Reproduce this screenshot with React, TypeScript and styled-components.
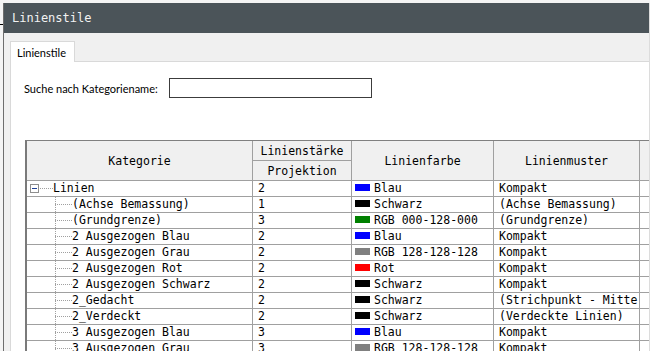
import React from 'react';
import styled, { createGlobalStyle } from 'styled-components';

const mono = `"DejaVu Sans Mono", "Liberation Mono", monospace`;
const sans = `Lato, "Noto Sans", sans-serif`;

type Row = {
    name: string;
    weight: string;
    colorName: string;
    color: string;
    pattern: string;
    parent?: boolean;
};

const rows: Row[] = [
    { name: 'Linien', weight: '2', colorName: 'Blau', color: '#0000ff', pattern: 'Kompakt', parent: true },
    { name: '(Achse Bemassung)', weight: '1', colorName: 'Schwarz', color: '#000000', pattern: '(Achse Bemassung)' },
    { name: '(Grundgrenze)', weight: '3', colorName: 'RGB 000-128-000', color: '#008000', pattern: '(Grundgrenze)' },
    { name: '2 Ausgezogen Blau', weight: '2', colorName: 'Blau', color: '#0000ff', pattern: 'Kompakt' },
    { name: '2 Ausgezogen Grau', weight: '2', colorName: 'RGB 128-128-128', color: '#808080', pattern: 'Kompakt' },
    { name: '2 Ausgezogen Rot', weight: '2', colorName: 'Rot', color: '#ff0000', pattern: 'Kompakt' },
    { name: '2 Ausgezogen Schwarz', weight: '2', colorName: 'Schwarz', color: '#000000', pattern: 'Kompakt' },
    { name: '2_Gedacht', weight: '2', colorName: 'Schwarz', color: '#000000', pattern: '(Strichpunkt - Mitte)' },
    { name: '2_Verdeckt', weight: '2', colorName: 'Schwarz', color: '#000000', pattern: '(Verdeckte Linien)' },
    { name: '3 Ausgezogen Blau', weight: '3', colorName: 'Blau', color: '#0000ff', pattern: 'Kompakt' },
    { name: '3 Ausgezogen Grau', weight: '3', colorName: 'RGB 128-128-128', color: '#808080', pattern: 'Kompakt' },
    { name: '3 Ausgezogen Rot', weight: '3', colorName: 'Rot', color: '#ff0000', pattern: 'Kompakt' },
];

export default function App() {
    return (
        <>
            <GlobalStyle />
            <Desktop>
                <Window>
                    <TitleBar>Linienstile</TitleBar>
                    <Body>
                        <TabStrip>
                            <Tab>Linienstile</Tab>
                        </TabStrip>
                        <TabPage>
                            <SearchRow>
                                <Label>Suche nach Kategoriename:</Label>
                                <SearchInput type="text" />
                            </SearchRow>
                            <Grid>
                                <HeadCell $span={2}>Kategorie</HeadCell>
                                <HeadCell>Linienstärke</HeadCell>
                                <HeadCell $span={2}>Linienfarbe</HeadCell>
                                <HeadCell $span={2}>Linienmuster</HeadCell>
                                <HeadCell $span={2} />
                                <HeadCell>Projektion</HeadCell>

                                {rows.map((r) => (
                                    <React.Fragment key={r.name}>
                                        <TreeCell>
                                            {r.parent ? (
                                                <>
                                                    <Toggle />
                                                    <Stub />
                                                </>
                                            ) : (
                                                <>
                                                    <Indent />
                                                    <Branch />
                                                </>
                                            )}
                                            <CellText>{r.name}</CellText>
                                        </TreeCell>
                                        <Cell>{r.weight}</Cell>
                                        <ColorCell>
                                            <Swatch style={{ background: r.color }} />
                                            <CellText>{r.colorName}</CellText>
                                        </ColorCell>
                                        <Cell>{r.pattern}</Cell>
                                        <Cell />
                                    </React.Fragment>
                                ))}
                            </Grid>
                        </TabPage>
                    </Body>
                </Window>
            </Desktop>
        </>
    );
}

const GlobalStyle = createGlobalStyle`
    html, body {
        margin: 0;
        padding: 0;
        overflow: hidden;
    }
    * {
        box-sizing: border-box;
    }
`;

const Desktop = styled.div`
    width: 650px;
    height: 351px;
    padding: 3px 0 0 3px;
    background: linear-gradient(to bottom, transparent 24px, #000 24px, #000 25px, transparent 25px), #f4f4f4;
    overflow: hidden;
`;

const Window = styled.div`
    display: flex;
    flex-direction: column;
    height: 100%;
    border-left: 1px solid #6e6e6e;
    border-right: 1px solid #dcdcdc;
    overflow: hidden;
`;

const TitleBar = styled.div`
    height: 30px;
    flex: none;
    display: flex;
    align-items: center;
    padding-left: 8px;
    background: #4b5459;
    color: #f2f2f2;
    font-family: ${mono};
    font-size: 12px;
`;

const Body = styled.div`
    flex: 1;
    display: flex;
    flex-direction: column;
    padding: 8px 0 0 6px;
    background: #f0f0f0;
`;

const TabStrip = styled.div`
    display: flex;
    border-bottom: 1px solid #d9d9d9;
`;

const Tab = styled.div`
    height: 21px;
    margin-bottom: -1px;
    padding: 4px 8px 0 6px;
    background: #fff;
    border: 1px solid #d9d9d9;
    border-bottom: none;
    color: #000;
    font-family: ${sans};
    font-size: 11px;
`;

const TabPage = styled.div`
    flex: 1;
    background: #fff;
    border-left: 1px solid #d9d9d9;
    padding: 16px 0 0 13px;
`;

const SearchRow = styled.div`
    display: flex;
    align-items: center;
    gap: 11px;
`;

const Label = styled.label`
    font-family: ${sans};
    font-size: 11px;
    color: #000;
`;

const SearchInput = styled.input`
    width: 203px;
    height: 20px;
    margin: 0;
    padding: 0 3px;
    border: 1px solid #3c3c3c;
    border-radius: 0;
    outline: none;
    background: #fff;
`;

const Grid = styled.div`
    display: grid;
    grid-template-columns: 226px 99px 142px 146px 60px;
    grid-template-rows: 20px 20px;
    grid-auto-rows: 16px;
    width: 675px;
    margin: 42px 0 0 1px;
    border-top: 1px solid #808080;
    border-left: 2px solid #7a7a7a;
    font-family: ${mono};
    font-size: 11.5px;
    color: #000;
`;

const Cell = styled.div`
    display: flex;
    align-items: center;
    padding-left: 5px;
    white-space: nowrap;
    overflow: hidden;
    line-height: 15px;
    background: #fff;
    border-right: 1px solid #a0a0a0;
    border-bottom: 1px solid #a0a0a0;
`;

const HeadCell = styled.div<{ $span?: number }>`
    grid-row: span ${(p) => p.$span ?? 1};
    display: flex;
    align-items: center;
    justify-content: center;
    background: #f0f0f0;
    border-right: 1px solid #a0a0a0;
    border-bottom: 1px solid #a0a0a0;
    white-space: nowrap;
`;

const TreeCell = styled(Cell)`
    padding-left: 0;
    align-items: stretch;
`;

const ColorCell = styled(Cell)`
    padding-left: 3px;
`;

const CellText = styled.span`
    align-self: center;
`;

const Toggle = styled.span`
    flex: none;
    align-self: center;
    width: 9px;
    height: 9px;
    margin: 0 0 1px 3px;
    border: 1px solid #8e8e8e;
    background: linear-gradient(#1d3f95, #1d3f95) center / 5px 1px no-repeat, #fff;
`;

const Stub = styled.span`
    flex: none;
    width: 14px;
    background: linear-gradient(to right, #a0a0a0 1px, transparent 1px) 1px 7px / 2px 1px repeat-x;
`;

const Indent = styled.span`
    flex: none;
    width: 28px;
`;

const Branch = styled.span`
    flex: none;
    width: 17px;
    background:
        linear-gradient(to right, #a0a0a0 1px, transparent 1px) 2px 7px / 2px 1px repeat-x,
        linear-gradient(to bottom, #a0a0a0 1px, transparent 1px) 0 0 / 1px 2px repeat-y;
    background-size: 2px 1px, 1px 2px;
    background-repeat: repeat-x, repeat-y;
    background-position: 2px 7px, 0 0;
`;

const Swatch = styled.span`
    flex: none;
    width: 15px;
    height: 7px;
    margin: 0 4px 2px 0;
`;
